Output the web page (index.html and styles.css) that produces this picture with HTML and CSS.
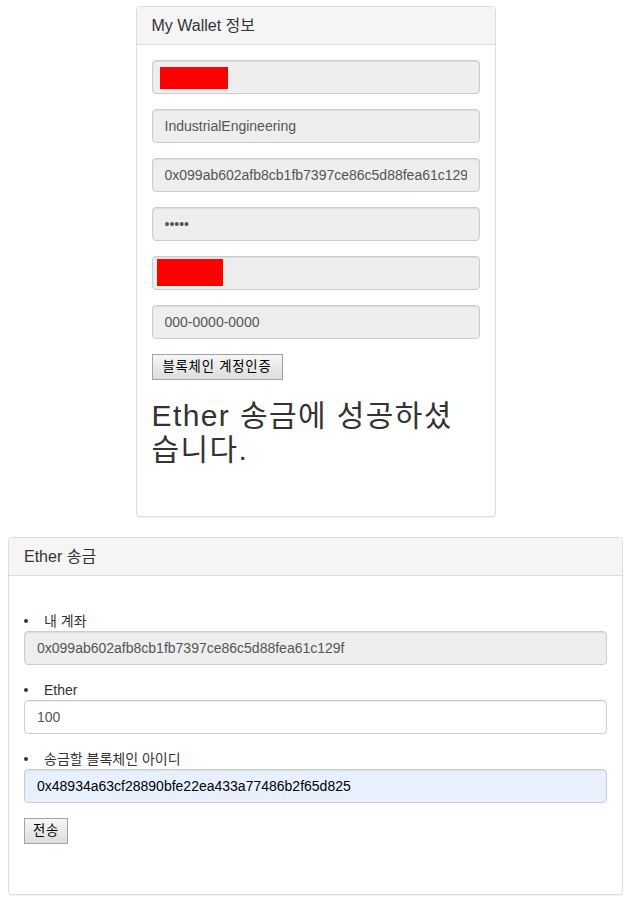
FILE: index.html
```html
<!DOCTYPE html>
<html lang="ko">
<head>
<meta charset="utf-8">
<title>My Wallet</title>
<link rel="stylesheet" href="styles.css">
</head>
<body>
<div class="page">
  <div class="panel panel-narrow">
    <div class="panel-heading">My Wallet 정보</div>
    <div class="panel-body">
      <div class="field">
        <input class="form-control" type="text" value="" disabled>
        <span class="redact redact-1"></span>
      </div>
      <div class="field">
        <input class="form-control" type="text" value="IndustrialEngineering" disabled>
      </div>
      <div class="field">
        <input class="form-control" type="text" value="0x099ab602afb8cb1fb7397ce86c5d88fea61c129f" disabled>
      </div>
      <div class="field">
        <input class="form-control" type="password" value="aaaaa" disabled>
      </div>
      <div class="field">
        <input class="form-control" type="text" value="" disabled>
        <span class="redact redact-2"></span>
      </div>
      <div class="field">
        <input class="form-control" type="text" value="000-0000-0000" disabled>
      </div>
      <button class="btn btn-auth" type="button">블록체인 계정인증</button>
      <h2 class="result">Ether 송금에 성공하셨습니다.</h2>
    </div>
  </div>

  <div class="panel panel-wide">
    <div class="panel-heading">Ether 송금</div>
    <div class="panel-body">
      <form class="send-form">
        <ul class="field-list">
          <li>
            <label class="item-label">내 계좌</label>
            <input class="form-control" type="text" value="0x099ab602afb8cb1fb7397ce86c5d88fea61c129f" disabled>
          </li>
          <li>
            <label class="item-label">Ether</label>
            <input class="form-control" type="text" value="100">
          </li>
          <li>
            <label class="item-label">송금할 블록체인 아이디</label>
            <input class="form-control autofilled" type="text" value="0x48934a63cf28890bfe22ea433a77486b2f65d825">
          </li>
        </ul>
        <button class="btn btn-send" type="button">전송</button>
      </form>
    </div>
  </div>
</div>
</body>
</html>
```
FILE: styles.css
```css
* { box-sizing: border-box; }
html, body { margin: 0; padding: 0; background: #fff; }
body {
  font-family: "Liberation Sans", "Noto Sans CJK KR", Arial, sans-serif;
  font-size: 14px;
  line-height: 20px;
  color: #333;
}
.page {
  width: 615px;
  margin-left: 8px;
  padding-top: 6px;
  padding-bottom: 8px;
}
.panel {
  border: 1px solid #ddd;
  border-radius: 4px;
  background: #fff;
  box-shadow: 0 1px 1px rgba(0,0,0,.05);
  margin-bottom: 20px;
}
.panel-narrow { width: 360px; margin-left: auto; margin-right: auto; }
.panel-wide { width: 615px; margin-bottom: 0; }
.panel-heading {
  background: #f5f5f5;
  border-bottom: 1px solid #ddd;
  border-radius: 3px 3px 0 0;
  padding: 10px 15px;
  font-size: 16px;
  line-height: 17px;
  color: #333;
}
.panel-body { padding: 15px; }
.field { position: relative; margin-bottom: 15px; }
.form-control {
  display: block;
  width: 100%;
  height: 34px;
  margin: 0;
  padding: 6px 12px;
  font-family: "Liberation Sans", "Noto Sans CJK KR", Arial, sans-serif;
  font-size: 14px;
  line-height: 20px;
  color: #555;
  background: #fff;
  border: 1px solid #ccc;
  border-radius: 4px;
  box-shadow: inset 0 1px 1px rgba(0,0,0,.075);
  outline: none;
}
.form-control:disabled { background: #eee; color: #555; opacity: 1; -webkit-text-fill-color: #555; }
.form-control.autofilled { background: #e8f0fe; color: #000; }
.redact { position: absolute; background: #f00; }
.redact-1 { left: 8px; top: 7px; width: 68px; height: 22px; }
.redact-2 { left: 5px; top: 3px; width: 66px; height: 27px; }
.btn {
  display: inline-block;
  height: 26px;
  margin: 0;
  padding: 1px 4px;
  font-family: "Liberation Sans", "Noto Sans CJK KR", Arial, sans-serif;
  font-size: 13.33px;
  line-height: 20px;
  color: #000;
  background: linear-gradient(#f6f6f6, #dddddd);
  border: 1px solid #a3a3a3;
  border-radius: 0;
  letter-spacing: 0.8px;
}
.btn-auth { width: 131px; }
.btn-send { width: 44px; }
.result {
  max-width: 318px;
  margin: 19px 0 34px;
  font-size: 30px;
  line-height: 34px;
  font-weight: 400;
  color: #333;
  letter-spacing: 1.4px;
}
.send-form { padding-bottom: 35px; }
.field-list { list-style: none; margin: 20px 0 0; padding: 0; }
.field-list li { margin-bottom: 15px; }
.item-label {
  display: flex;
  align-items: center;
  height: 20px;
  color: #333;
}
.item-label::before {
  content: "";
  width: 4px;
  height: 4px;
  border-radius: 50%;
  background: #333;
  margin-left: 0;
  margin-right: 16px;
}
```
